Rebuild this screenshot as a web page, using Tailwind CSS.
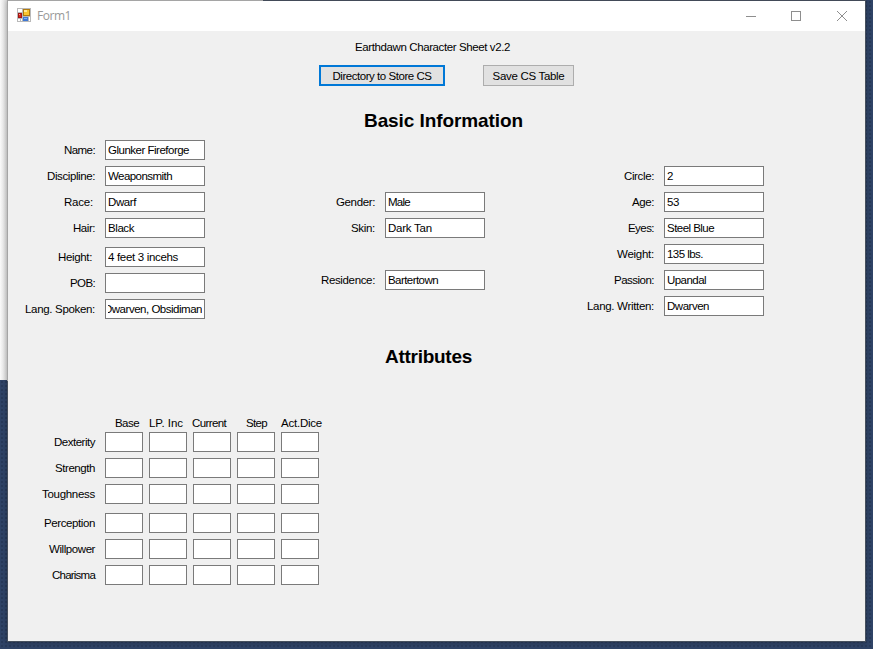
<!DOCTYPE html>
<html lang="en">
<head>
<meta charset="utf-8">
<title>Form1</title>
<script src="https://cdn.jsdelivr.net/npm/@tailwindcss/browser@4"></script>
</head>
<body class="relative h-[649px] w-[873px] overflow-hidden bg-[#2f4366] bg-[radial-gradient(#283a5a_1px,transparent_1px)] bg-[size:4px_4px] font-['Liberation_Sans',Arial,sans-serif] text-[11.5px] leading-[14px] text-black">
<div class="absolute left-0 top-0 h-[380px] w-[8px] bg-linear-to-r from-[#fafafa] to-[#d2d2d2]"></div>
<main class="absolute left-[7px] top-0 flex h-[642px] w-[859px] flex-col border border-[#454f5d] border-t-[#424a58] bg-[#f0f0f0] shadow-[0_1px_5px_rgba(0,0,0,.25)]">
  <div class="absolute -left-px -top-px h-px w-[256px] bg-[#a5a5a5]"></div>
  <div class="absolute -left-px -top-px h-[381px] w-px bg-[#a5a5a5]"></div>
  <header class="flex h-[30px] shrink-0 items-center bg-white pl-[9px]">
    <svg class="-mt-[2px] h-[14px] w-[14px]" viewBox="0 0 14 14" shape-rendering="crispEdges">
      <path fill="#b9b9b9" d="M0 0h14v14H0z"/>
      <path fill="#fff" d="M1 1h4v3H1zM1 11h2v2H1zM4 11h1v2H4zM12 9h1v4h-1z"/>
      <path fill="#b07a10" d="M6 1h7v7H6z"/><path fill="#f9c52f" d="M7 2h5v5H7z"/><path fill="#ffe794" d="M7 2h3v2H7z"/>
      <path fill="#a01414" d="M1 5h4v5H1z"/><path fill="#d8281b" d="M2 6h2v3H2z"/><path fill="#f3a08f" d="M2 6h1v1H2z"/>
      <path fill="#3f78d4" d="M6 9h5v4H6z"/><path fill="#7fb1f8" d="M7 10h3v1H7z"/>
    </svg>
    <span class="ml-[6px] whitespace-nowrap font-['Open_Sans',sans-serif] text-[12px] text-[#999]" data-w="34" data-font="12px 'Open Sans'">Form1</span>
    <svg class="ml-auto mr-[17px] mt-[-2px] h-[12px] w-[103px] fill-none stroke-[#8e8e8e]" viewBox="0 0 103 12">
      <path d="M1 7.5h10M46.500 2.500h9v9h-9z" shape-rendering="crispEdges"/>
      <path d="M92 2l10 10M102 2l-10 10"/>
    </svg>
  </header>
  <div class="flex h-[34px] shrink-0 items-start pl-[347px] pt-[9px]"><span class="whitespace-nowrap" data-w="155">Earthdawn Character Sheet v2.2</span></div>
  <div class="flex h-[21px] shrink-0 gap-[38px] pl-[311px]">
    <button class="flex h-[21px] w-[126px] items-center justify-center border-2 border-[#0078d7] bg-[#e1e1e1]"><span class="whitespace-nowrap" data-w="99">Directory to Store CS</span></button>
    <button class="flex h-[21px] w-[91px] items-center justify-center border border-[#adadad] bg-[#e1e1e1]"><span class="whitespace-nowrap" data-w="72">Save CS Table</span></button>
  </div>
  <h1 class="flex h-[54px] shrink-0 pl-[356px] pt-[23px] text-[19px] font-bold leading-6"><span class="whitespace-nowrap" data-w="159" data-font="bold 19px 'Liberation Sans'">Basic Information</span></h1>
  <section class="flex h-[204px] shrink-0">
    <div id="personal" class="w-[197px]"></div>
    <div id="looks" class="ml-[80px] w-[200px] pt-[52px]"></div>
    <div id="status" class="ml-[79px] w-[200px] pt-[26px]"></div>
  </section>
  <h1 class="flex h-[72px] shrink-0 pl-[377px] pt-px text-[19px] font-bold leading-6"><span class="whitespace-nowrap" data-w="87" data-font="bold 19px 'Liberation Sans'">Attributes</span></h1>
  <section id="attributes">
    <div class="flex h-[16px] pl-[107px]">
      <span class="w-[34px] whitespace-nowrap" data-w="24">Base</span>
      <span class="w-[43px] whitespace-nowrap" data-w="34">LP. Inc</span>
      <span class="w-[54px] whitespace-nowrap" data-w="34">Current</span>
      <span class="w-[35px] whitespace-nowrap" data-w="21">Step</span>
      <span class="whitespace-nowrap" data-w="41">Act.Dice</span>
    </div>
  </section>
</main>
<script>
// Each field: label, label width, label right gap, value, value width, space below.
const fields = {
  personal: [
    ['Name:', 31, 10, 'Glunker Fireforge', 81, 6],
    ['Discipline:', 48, 10, 'Weaponsmith', 64, 6],
    ['Race:', 29, 12, 'Dwarf', 28, 6],
    ['Hair:', 22, 10, 'Black', 26, 9],
    ['Height:', 34, 13, '4 feet 3 incehs', 70, 6],
    ['POB:', 25, 10, '', 0, 6],
    ['Lang. Spoken:', 70, 10, 'Dwarven, Obsidiman', 98, 0, true]
  ],
  looks: [
    ['Gender:', 39, 10, 'Male', 22, 6],
    ['Skin:', 24, 10, 'Dark Tan', 44, 32],
    ['Residence:', 54, 10, 'Bartertown', 50, 0]
  ],
  status: [
    ['Circle:', 30, 10, '2', 6, 6],
    ['Age:', 22, 10, '53', 12, 6],
    ['Eyes:', 26, 10, 'Steel Blue', 47, 6],
    ['Weight:', 37, 10, '135 lbs.', 36, 6],
    ['Passion:', 40, 10, 'Upandal', 39, 6],
    ['Lang. Written:', 67, 10, 'Dwarven', 42, 0]
  ]
};
for (const [id, rows] of Object.entries(fields)) {
  document.getElementById(id).innerHTML = rows.map(([label, lw, gap, value, vw, below, end]) => `
    <div class="flex h-[20px] items-center justify-end" style="margin-bottom:${below}px">
      <span class="whitespace-nowrap" style="margin-right:${gap}px" data-w="${lw}">${label}</span>
      <div class="h-[20px] w-[100px] shrink-0 border border-[#7a7a7a] bg-white px-[2px] pt-[2px]"><div class="flex overflow-hidden ${end ? 'justify-end' : 'justify-start'}"><span class="whitespace-nowrap" data-w="${vw}">${value}</span></div></div>
    </div>`).join('');
}
const attributes = [['Dexterity', 41, 6], ['Strength', 40, 6], ['Toughness', 53, 9], ['Perception', 51, 6], ['Willpower', 46, 6], ['Charisma', 43, 0]];
document.getElementById('attributes').insertAdjacentHTML('beforeend', attributes.map(([name, w, below]) => `
  <div class="flex h-[20px] items-center gap-[6px]" style="margin-bottom:${below}px">
    <div class="mr-[4px] flex w-[87px] justify-end"><span class="whitespace-nowrap" data-w="${w}">${name}</span></div>
    ${'<div class="h-[20px] w-[38px] border border-[#7a7a7a] bg-white"></div>'.repeat(5)}
  </div>`).join(''));
// Fit captions to their design widths through letter spacing.
const ctx = document.createElement('canvas').getContext('2d');
document.querySelectorAll('[data-w]').forEach(el => {
  const text = el.textContent;
  if (!text) return;
  ctx.font = el.dataset.font || "11.5px 'Liberation Sans'";
  el.style.letterSpacing = (+el.dataset.w - ctx.measureText(text).width) / text.length + 'px';
});
</script>
</body>
</html>
